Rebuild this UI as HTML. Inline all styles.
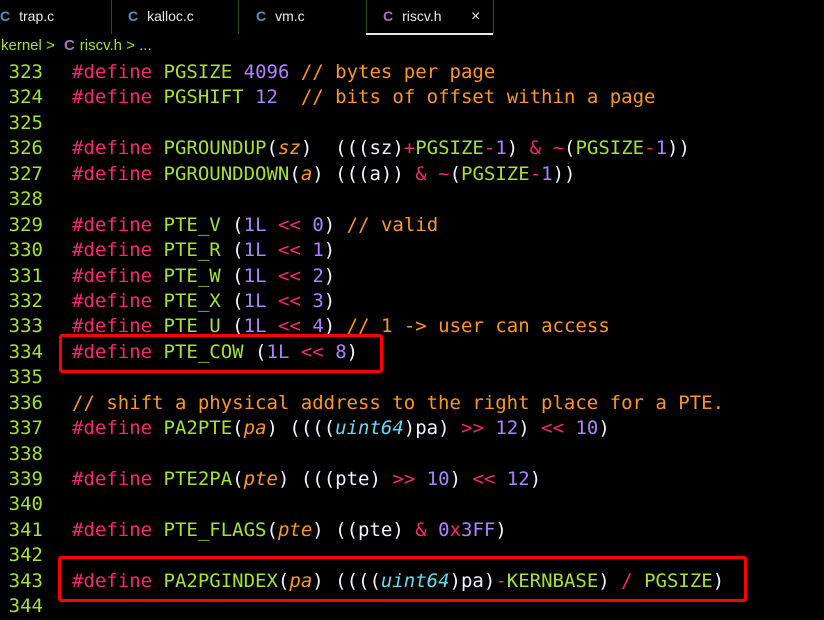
<!DOCTYPE html>
<html><head><meta charset="utf-8"><style>
body{margin:0;background:#000;width:824px;height:612px;overflow:hidden;position:relative;font-family:"Liberation Sans",sans-serif}
.tabs{position:absolute;top:0;left:0;width:824px;height:34px;background:#000}
.tab{position:absolute;top:0;height:34px;line-height:33px;font-size:14px;color:#e8e8e8}
.sep{position:absolute;top:0;width:1px;height:34px;background:#3a4a1a}
.c{font-weight:bold;color:#519aba;margin-right:9px}
.crumb{position:absolute;top:37px;left:1px;font-size:15px;color:#a6e22e;line-height:18px}
.code{position:absolute;top:60px;left:0;font-family:"DejaVu Sans Mono",monospace;font-size:19px;line-height:25.43px;white-space:pre;color:#f0f4ff}
.ln{display:inline-block;width:43px;text-align:right;color:#a6e22e;margin-right:29px}
.k{color:#f92672}.g{color:#a6e22e}.n{color:#ae81ff}.cm{color:#fd971f}.p{color:#fd971f;font-style:italic}.t{color:#66d9ef;font-style:italic}
.box{position:absolute;border:3px solid #ff0000;border-radius:3px}
</style></head><body>
<div class="tabs">
<div class="tab" style="left:0"><span class="c">C</span>trap.c</div>
<div class="sep" style="left:111px"></div>
<div class="tab" style="left:128px"><span class="c">C</span>kalloc.c</div>
<div class="sep" style="left:238px"></div>
<div class="tab" style="left:256px"><span class="c">C</span>vm.c</div>
<div class="sep" style="left:366px"></div>
<div class="tab" style="left:383px"><span class="c" style="color:#a074c4">C</span>riscv.h</div>
<div class="tab" style="left:471px;font-size:16px">×</div>
<div style="position:absolute;left:366px;top:33px;width:127px;height:2px;background:#e8e8e8"></div>
<div class="sep" style="left:493px"></div>
</div>
<div class="crumb">kernel &gt; <span style="color:#a074c4;font-weight:bold;margin:0 5px">C</span>riscv.h &gt; ...</div>
<div class="code"><span class="ln">323</span><span class="k">#define</span> <span class="g">PGSIZE</span> <span class="n">4096</span> <span class="cm">// bytes per page</span>
<span class="ln">324</span><span class="k">#define</span> <span class="g">PGSHIFT</span> <span class="n">12</span>  <span class="cm">// bits of offset within a page</span>
<span class="ln">325</span>
<span class="ln">326</span><span class="k">#define</span> <span class="g">PGROUNDUP</span>(<span class="p">sz</span>)  (((sz)<span class="k">+</span><span class="g">PGSIZE</span><span class="k">-</span><span class="n">1</span>) <span class="k">&amp;</span> <span class="k">~</span>(<span class="g">PGSIZE</span><span class="k">-</span><span class="n">1</span>))
<span class="ln">327</span><span class="k">#define</span> <span class="g">PGROUNDDOWN</span>(<span class="p">a</span>) (((a)) <span class="k">&amp;</span> <span class="k">~</span>(<span class="g">PGSIZE</span><span class="k">-</span><span class="n">1</span>))
<span class="ln">328</span>
<span class="ln">329</span><span class="k">#define</span> <span class="g">PTE_V</span> (<span class="n">1L</span> <span class="k">&lt;&lt;</span> <span class="n">0</span>) <span class="cm">// valid</span>
<span class="ln">330</span><span class="k">#define</span> <span class="g">PTE_R</span> (<span class="n">1L</span> <span class="k">&lt;&lt;</span> <span class="n">1</span>)
<span class="ln">331</span><span class="k">#define</span> <span class="g">PTE_W</span> (<span class="n">1L</span> <span class="k">&lt;&lt;</span> <span class="n">2</span>)
<span class="ln">332</span><span class="k">#define</span> <span class="g">PTE_X</span> (<span class="n">1L</span> <span class="k">&lt;&lt;</span> <span class="n">3</span>)
<span class="ln">333</span><span class="k">#define</span> <span class="g">PTE_U</span> (<span class="n">1L</span> <span class="k">&lt;&lt;</span> <span class="n">4</span>) <span class="cm">// 1 -&gt; user can access</span>
<span class="ln">334</span><span class="k">#define</span> <span class="g">PTE_COW</span> (<span class="n">1L</span> <span class="k">&lt;&lt;</span> <span class="n">8</span>)
<span class="ln">335</span>
<span class="ln">336</span><span class="cm">// shift a physical address to the right place for a PTE.</span>
<span class="ln">337</span><span class="k">#define</span> <span class="g">PA2PTE</span>(<span class="p">pa</span>) ((((<span class="t">uint64</span>)pa) <span class="k">&gt;&gt;</span> <span class="n">12</span>) <span class="k">&lt;&lt;</span> <span class="n">10</span>)
<span class="ln">338</span>
<span class="ln">339</span><span class="k">#define</span> <span class="g">PTE2PA</span>(<span class="p">pte</span>) (((pte) <span class="k">&gt;&gt;</span> <span class="n">10</span>) <span class="k">&lt;&lt;</span> <span class="n">12</span>)
<span class="ln">340</span>
<span class="ln">341</span><span class="k">#define</span> <span class="g">PTE_FLAGS</span>(<span class="p">pte</span>) ((pte) <span class="k">&amp;</span> <span class="n">0</span><span class="k">x</span><span class="n">3FF</span>)
<span class="ln">342</span>
<span class="ln">343</span><span class="k">#define</span> <span class="g">PA2PGINDEX</span>(<span class="p">pa</span>) ((((<span class="t">uint64</span>)pa)<span class="k">-</span><span class="g">KERNBASE</span>) <span class="k">/</span> <span class="g">PGSIZE</span>)
<span class="ln">344</span></div>
<div class="box" style="left:59px;top:334px;width:318px;height:33px"></div>
<div class="box" style="left:58px;top:556px;width:683px;height:40px"></div>
</body></html>
